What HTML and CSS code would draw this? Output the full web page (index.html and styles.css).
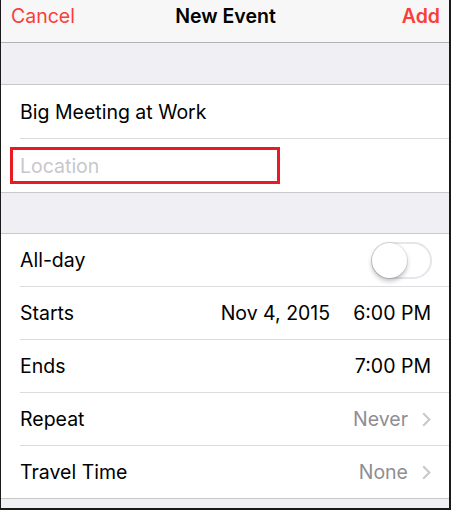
FILE: index.html
```html
<!DOCTYPE html>
<html>
<head>
<meta charset="utf-8">
<link rel="stylesheet" href="styles.css">
</head>
<body>
<div class="screen">
  <header class="nav">
    <span class="nav-btn">Cancel</span>
    <span class="nav-title">New Event</span>
    <span class="nav-btn nav-right">Add</span>
  </header>
  <div class="spacer spacer-1"></div>
  <section class="group group-1">
    <div class="row row-tall"><span class="label">Big Meeting at Work</span></div>
    <div class="row row-tall row-location">
      <span class="placeholder">Location</span>
      <div class="highlight"></div>
    </div>
  </section>
  <div class="spacer spacer-2"></div>
  <section class="group">
    <div class="row">
      <span class="label">All-day</span>
      <span class="switch"><span class="knob"></span></span>
    </div>
    <div class="row">
      <span class="label">Starts</span>
      <span class="values"><span>Nov 4, 2015</span><span>6:00 PM</span></span>
    </div>
    <div class="row">
      <span class="label">Ends</span>
      <span class="values"><span>7:00 PM</span></span>
    </div>
    <div class="row">
      <span class="label">Repeat</span>
      <span class="detail">Never<svg class="chev" width="9" height="15" viewBox="0 0 9 15"><path d="M1.2 1.2 L7.4 7.5 L1.2 13.8" fill="none" stroke="#c7c7cc" stroke-width="2"/></svg></span>
    </div>
    <div class="row">
      <span class="label">Travel Time</span>
      <span class="detail">None<svg class="chev" width="9" height="15" viewBox="0 0 9 15"><path d="M1.2 1.2 L7.4 7.5 L1.2 13.8" fill="none" stroke="#c7c7cc" stroke-width="2"/></svg></span>
    </div>
  </section>
  <div class="spacer-fill"></div>
</div>
</body>
</html>
```
FILE: styles.css
```css
* { box-sizing: border-box; }
html, body { margin: 0; padding: 0; }
body {
  font-family: "Inter", "Liberation Sans", sans-serif;
  color: #000;
}
.screen {
  width: 451px;
  height: 510px;
  background: #efeff4;
  border-left: 1px solid #1a1a1a;
  border-right: 2px solid #1a1a1a;
  border-bottom: 2px solid #1a1a1a;
  display: flex;
  flex-direction: column;
  overflow: hidden;
}
.nav {
  height: 43px;
  flex: none;
  background: #f7f7f7;
  border-bottom: 1px solid #b2b2b2;
  display: grid;
  grid-template-columns: 1fr auto 1fr;
  align-items: center;
  padding: 0 9px 10px 10px;
  font-size: 19.5px;
}
.nav-btn { color: #fc3d39; }
.nav-right { justify-self: end; font-weight: 600; }
.nav-title { font-weight: 600; }
.spacer-1 { height: 41px; flex: none; }
.spacer-2 { height: 40px; flex: none; }
.spacer-fill { flex: 1; }
.group {
  background: #fff;
  border-top: 1px solid #c8c7cc;
  border-bottom: 1px solid #c8c7cc;
  padding-left: 19px;
  flex: none;
}
.row {
  height: 53px;
  display: flex;
  align-items: center;
  justify-content: space-between;
  padding-right: 18px;
  border-bottom: 1px solid #dcdce0;
  font-size: 19.5px;
  position: relative;
}
.row:last-child { border-bottom: none; height: 52px; }
.group-1 .row { height: 54px; }
.group-1 .row:last-child { height: 53px; }
.placeholder { color: #c7c7cd; }
.highlight {
  position: absolute;
  left: -10px;
  top: 8px;
  width: 270px;
  height: 37px;
  border: 3px solid #e81a24;
}
.values { display: flex; gap: 23px; }
.detail {
  display: flex;
  align-items: center;
  color: #8e8e93;
  gap: 14px;
}
.chev { display: block; }
.switch {
  width: 61px;
  height: 37px;
  margin-right: -1px;
  border-radius: 19px;
  border: 2px solid #e5e5ea;
  background: #fff;
  position: relative;
}
.knob {
  position: absolute;
  left: -1px;
  top: -1px;
  width: 35px;
  height: 35px;
  border-radius: 50%;
  background: #fff;
  box-shadow: 0 3px 5px rgba(0,0,0,0.25), 0 0 0 1px rgba(0,0,0,0.08);
}
```
